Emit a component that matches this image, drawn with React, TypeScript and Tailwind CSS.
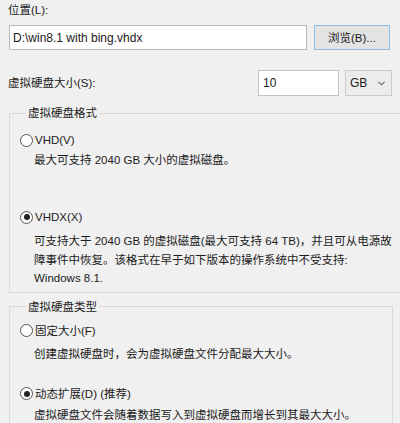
import React from "react";

function Radio({ checked }: { checked?: boolean }) {
  return (
    <span className="flex h-[13px] w-[13px] shrink-0 items-center justify-center rounded-full border border-[#555] bg-white">
      {checked && <span className="h-[6px] w-[6px] rounded-full bg-[#222]" />}
    </span>
  );
}

function Option({ label, checked }: { label: string; checked?: boolean }) {
  return (
    <div className="flex h-[16px] items-center gap-[2px]">
      <Radio checked={checked} />
      <span>{label}</span>
    </div>
  );
}

export default function App() {
  return (
    <div
      className="h-[423px] w-[400px] overflow-hidden bg-[#f0f0f0] pt-[2px] pl-[8px] text-[11.5px] leading-[16px] whitespace-nowrap text-[#1b1b1b]"
      style={{ fontFamily: '"Liberation Sans", "Noto Sans CJK SC", sans-serif' }}
    >
      <div>位置(L):</div>

      {/* path row */}
      <div className="mt-[7px] flex items-center gap-[7px] pl-[1px]">
        <div className="flex h-[25px] w-[298px] items-center border border-[#b9b9b9] bg-white px-[3px] text-[12px]">
          D:\win8.1 with bing.vhdx
        </div>
        <div className="flex h-[25px] w-[76px] items-center justify-center border border-[#8ebde9] bg-[#e3e3e3]">
          浏览(B)...
        </div>
      </div>

      {/* size row */}
      <div className="mt-[20px] flex h-[26px] items-center">
        <span className="w-[250px]">虚拟硬盘大小(S):</span>
        <div className="flex h-[26px] w-[81px] items-center border border-[#c4c4c4] bg-white px-[4px] text-[12px]">
          10
        </div>
        <div className="ml-[6px] flex h-[26px] w-[47px] items-center justify-between border border-[#c9c9c9] bg-[#ececec] pr-[6px] pl-[4px] text-[12px]">
          <span>GB</span>
          <svg width="7" height="5" viewBox="0 0 7 5" fill="none">
            <path d="M0.5 0.8 L3.5 3.8 L6.5 0.8" stroke="#666" strokeWidth="1.1" />
          </svg>
        </div>
      </div>

      {/* format group */}
      <fieldset className="mt-[9px] mr-[7px] ml-[1px] border border-[#d9d9d9] px-[10px] pb-[4px]">
        <legend className="ml-[6px] px-[2px]">虚拟硬盘格式</legend>
        <div className="mt-[11px]">
          <Option label="VHD(V)" />
        </div>
        <div className="mt-[4px] pl-[14px]">最大可支持 2040 GB 大小的虚拟磁盘。</div>
        <div className="mt-[41px]">
          <Option label="VHDX(X)" checked />
        </div>
        <div className="mt-[7px] pl-[14px] leading-[18.5px]">
          可支持大于 2040 GB 的虚拟磁盘(最大可支持 64 TB)，并且可从电源故
          <br />
          障事件中恢复。该格式在早于如下版本的操作系统中不受支持:
          <br />
          Windows 8.1.
        </div>
      </fieldset>

      {/* type group */}
      <fieldset className="mt-[6px] mr-[7px] ml-[1px] border border-[#d9d9d9] px-[10px] pb-[4px]">
        <legend className="ml-[6px] px-[2px]">虚拟硬盘类型</legend>
        <div className="mt-[8px]">
          <Option label="固定大小(F)" />
        </div>
        <div className="mt-[7px] pl-[14px]">创建虚拟硬盘时，会为虚拟硬盘文件分配最大大小。</div>
        <div className="mt-[24px]">
          <Option label="动态扩展(D) (推荐)" checked />
        </div>
        <div className="mt-[5px] pl-[14px]">虚拟硬盘文件会随着数据写入到虚拟硬盘而增长到其最大大小。</div>
      </fieldset>
    </div>
  );
}
